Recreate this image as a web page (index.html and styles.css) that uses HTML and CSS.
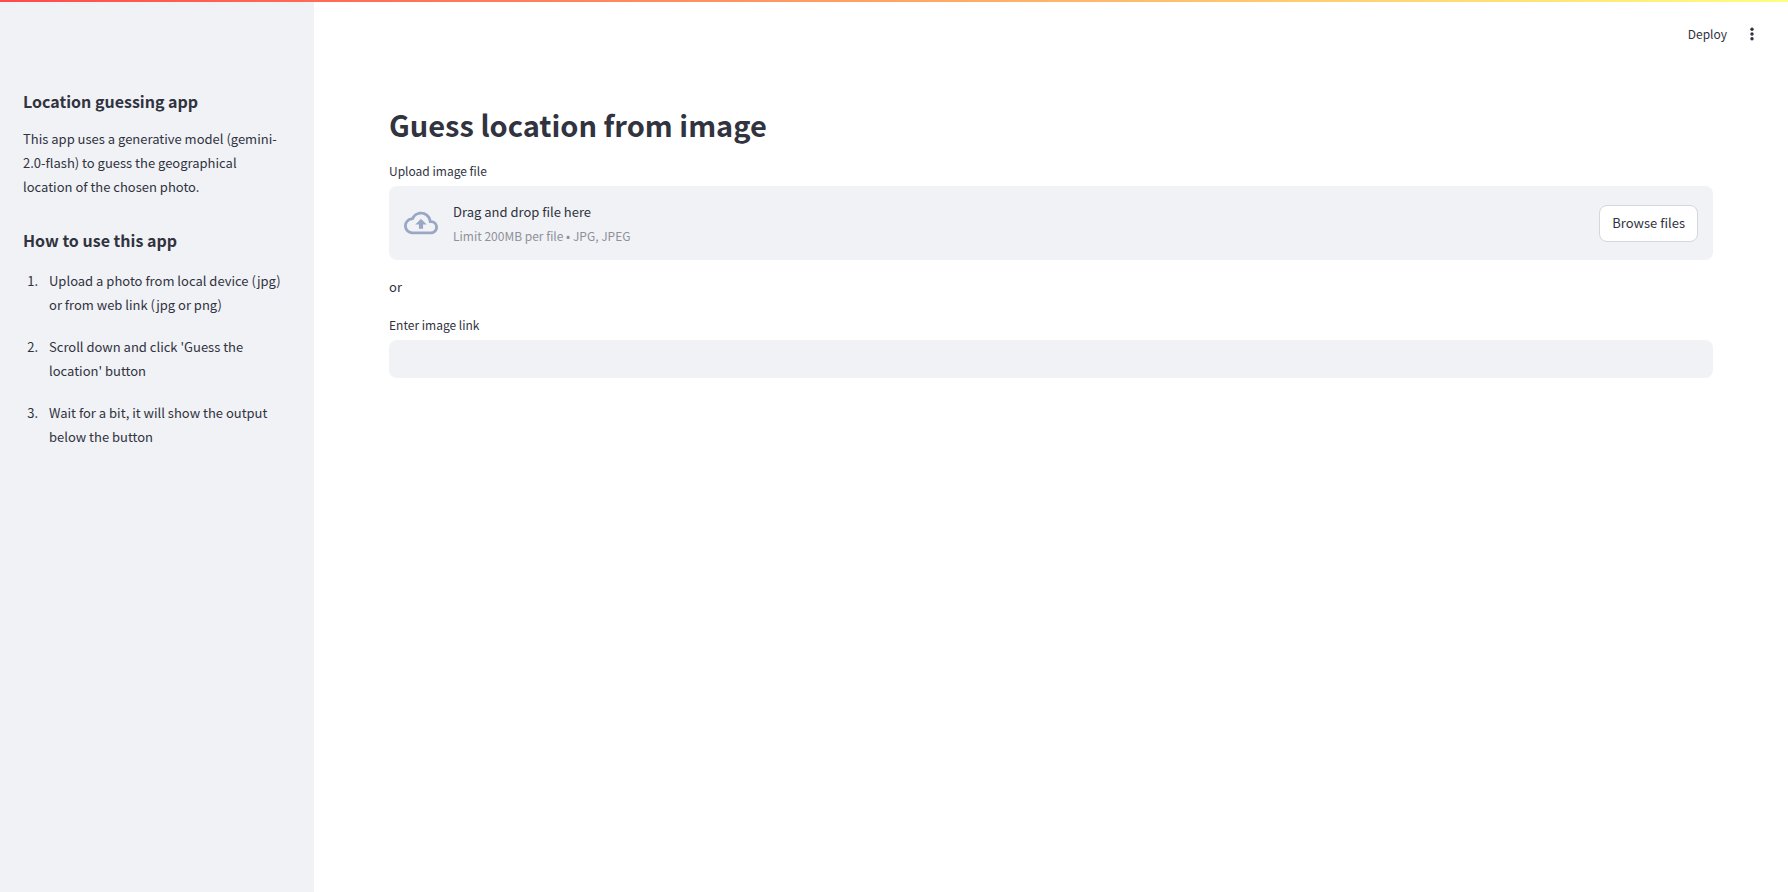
FILE: index.html
```html
<!DOCTYPE html>
<html lang="en">
<head>
<meta charset="utf-8">
<meta name="viewport" content="width=device-width, initial-scale=1">
<title>Guess location from image</title>
<link rel="stylesheet" href="styles.css">
</head>
<body>
<div class="decoration"></div>
<div class="app">
  <aside class="sidebar">
    <h2 class="sidebar-title">Location guessing app</h2>
    <p class="about">This app uses a generative model (gemini-<wbr>2.0-flash) to guess the geographical location of the chosen photo.</p>
    <h2 class="sidebar-title">How to use this app</h2>
    <ol class="steps">
      <li>Upload a photo from local device (jpg) or from web link (jpg or png)</li>
      <li>Scroll down and click 'Guess the location' button</li>
      <li>Wait for a bit, it will show the output below the button</li>
    </ol>
  </aside>
  <div class="page">
    <header class="toolbar">
      <button class="deploy" type="button">Deploy</button>
      <button class="menu" type="button" aria-label="Main menu">
        <svg width="18" height="18" viewBox="0 0 18 18" fill="currentColor"><circle cx="9" cy="4.2" r="1.7"/><circle cx="9" cy="9" r="1.7"/><circle cx="9" cy="13.8" r="1.7"/></svg>
      </button>
    </header>
    <main class="content">
      <h1 class="title">Guess location from image</h1>
      <label class="label" for="browse">Upload image file</label>
      <section class="dropzone">
        <svg class="cloud" width="34" height="34" viewBox="0 0 24 24" fill="currentColor"><path d="M19.35 10.04A7.49 7.49 0 0 0 12 4C9.11 4 6.6 5.64 5.35 8.04A5.994 5.994 0 0 0 0 14c0 3.31 2.69 6 6 6h13c2.76 0 5-2.24 5-5 0-2.64-2.05-4.78-4.65-4.96zM19 18H6c-2.21 0-4-1.79-4-4 0-2.05 1.53-3.76 3.56-3.97l1.07-.11.5-.95A5.469 5.469 0 0 1 12 6c2.62 0 4.88 1.86 5.39 4.43l.3 1.5 1.53.11A2.98 2.98 0 0 1 22 15c0 1.65-1.35 3-3 3zM8 13h2.55v3h2.9v-3H16l-4-4z"/></svg>
        <div class="hint">
          <span class="hint-main">Drag and drop file here</span>
          <span class="hint-limit">Limit 200MB per file • JPG, JPEG</span>
        </div>
        <button class="browse" id="browse" type="button">Browse files</button>
      </section>
      <p class="or">or</p>
      <label class="label" for="link">Enter image link</label>
      <input class="link-input" id="link" type="text">
    </main>
  </div>
</div>
</body>
</html>
```
FILE: styles.css
```css
* { box-sizing: border-box; }
body {
  margin: 0;
  background: #fff;
  color: #31333f;
  font-family: "Noto Sans CJK JP", "Noto Sans", sans-serif;
  font-size: 13px;
  line-height: 24px;
}
button, input { font: inherit; color: inherit; }
.decoration {
  position: fixed;
  inset: 0 0 auto;
  height: 2px;
  background: linear-gradient(90deg, #ff4b4b, #fffd80);
}
.app { display: flex; min-height: 100vh; }
.sidebar {
  flex: 0 0 314px;
  padding: 89px 23px 24px;
  background: #f0f2f6;
}
.sidebar-title { margin: 0; font-size: 16px; line-height: 24px; font-weight: 700; }
.about { margin: 14px 0 29px; padding-right: 10px; }
.steps { margin: 17px 0 0; padding: 0 0 0 18px; }
.steps li { margin-bottom: 18px; padding-left: 8px; }
.page { flex: 1; min-width: 0; }
.toolbar {
  display: flex;
  justify-content: flex-end;
  align-items: center;
  gap: 16px;
  height: 56px;
  padding: 12px 27px 0 0;
}
.deploy, .menu {
  display: flex;
  padding: 0;
  border: 0;
  background: none;
  font-size: 12px;
  line-height: 20px;
}
.content { padding: 40px 75px; }
.title { margin: 0 0 8px; font-size: 29px; line-height: 56px; font-weight: 700; }
.label { display: block; margin-bottom: 4px; font-size: 12px; line-height: 22px; }
.dropzone {
  display: flex;
  align-items: center;
  gap: 15px;
  padding: 12px 15px;
  border-radius: 8px;
  background: #f0f2f6;
}
.cloud { color: #99a7c5; }
.hint { display: flex; flex: 1; flex-direction: column; padding-top: 2px; }
.hint-main, .hint-limit { line-height: 24px; }
.hint-limit { color: #8f9199; font-size: 12px; }
.browse {
  height: 37px;
  padding: 0 12px;
  border: 1px solid #d6d7dc;
  border-radius: 8px;
  background: #fff;
}
.or { margin: 15px 0; }
.link-input {
  display: block;
  width: 100%;
  height: 38px;
  padding: 0 12px;
  border: 0;
  border-radius: 8px;
  background: #f0f2f6;
}
```
